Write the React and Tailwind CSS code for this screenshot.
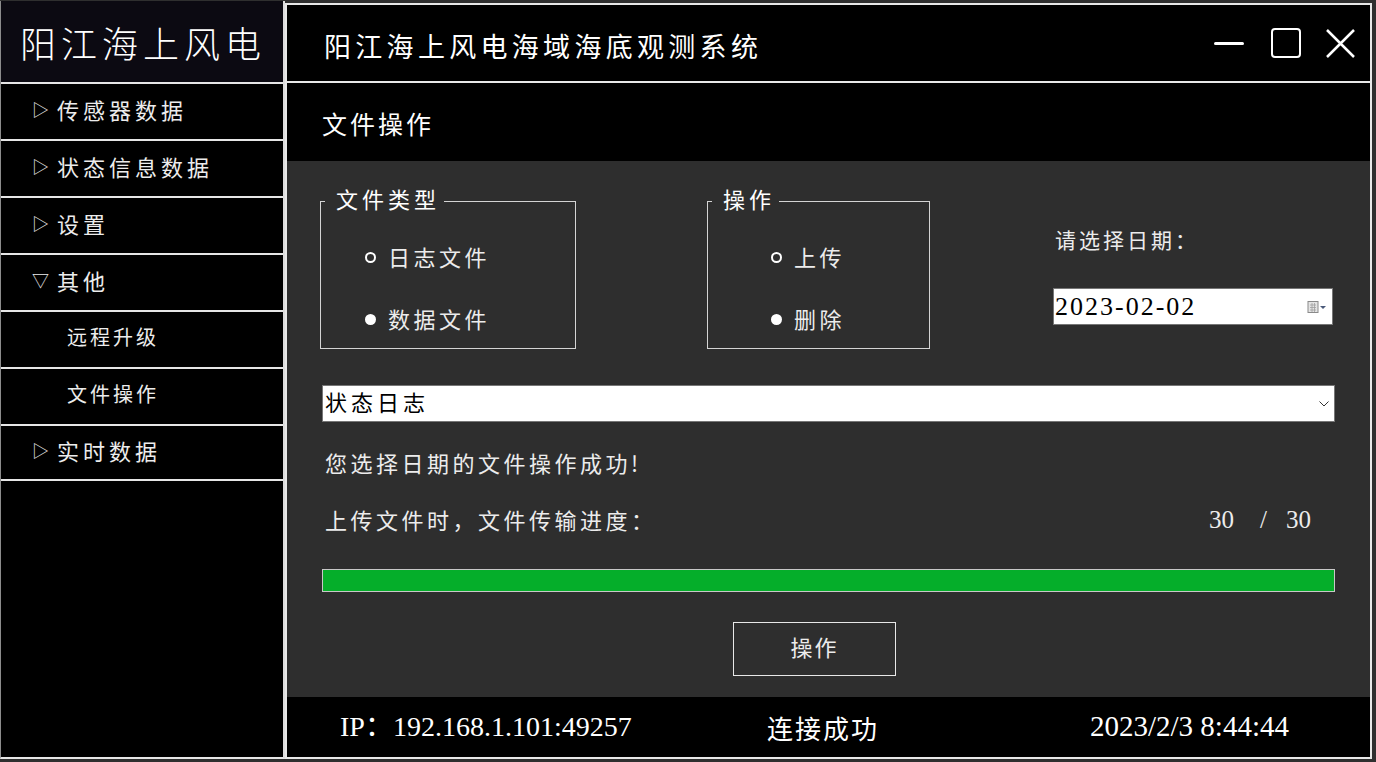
import React from 'react';

const cjk = "font-['Noto_Sans_CJK_SC',sans-serif]";
const serif = "font-['Liberation_Serif','Noto_Sans_CJK_SC',serif]";

const menu = [
    { t: '传感器数据', icon: '▷' },
    { t: '状态信息数据', icon: '▷' },
    { t: '设置', icon: '▷' },
    { t: '其他', icon: '▽' },
    { t: '远程升级', sub: true },
    { t: '文件操作', sub: true },
    { t: '实时数据', icon: '▷' },
];

const Radio = ({ on, label, offset }) => (
    <div className="flex items-center h-[30px]" style={{ paddingLeft: offset }}>
        {on
            ? <span className="w-[11px] h-[11px] rounded-full bg-white" />
            : <span className="w-[11px] h-[11px] rounded-full border-2 border-white" />}
        <span className="ml-[12px] pb-[3px] text-[22px] leading-[30px] tracking-[3.5px] text-[#ececec]">{label}</span>
    </div>
);

const Group = ({ title, width, offset, items, className }) => (
    <div className={"relative h-[148px] border border-[#d4d4d4] " + className} style={{ width }}>
        <div className="absolute -top-[19px] left-[4px] bg-[#2e2e2e] pl-[11px] pr-[4px] text-[22px] leading-[30px] tracking-[4px] text-white">
            {title}
        </div>
        <div className="pt-[40px] flex flex-col gap-[32px]">
            {items.map((it, i) => <Radio key={i} on={it.on} label={it.label} offset={offset} />)}
        </div>
    </div>
);

const App = () => {
    return (
        <div className={"w-[1376px] h-[762px] bg-[#2f2f2f] flex overflow-hidden " + cjk}>
            {/* Sidebar */}
            <div className="w-[285px] h-[758px] mt-[1px] bg-black border-l border-[#8c8c8c] border-r-2 border-r-[#dcdcdc] border-b-2 border-b-[#e6e6e6] flex flex-col">
                <div className="h-[81px] bg-[#0c0a12] flex items-center pl-[19px] text-[36px] tracking-[5px] text-white font-light">
                    阳江海上风电
                </div>
                {menu.map((m, i) => (
                    <div key={i} className={"h-[57px] pb-[5px] border-t-2 border-[#e6e6e6] flex items-center text-[#ececec] " + (i === menu.length - 1 ? 'border-b-2 border-b-[#e6e6e6]' : '')}>
                        {m.sub ? (
                            <span className="pl-[66px] text-[20px] tracking-[3px]">{m.t}</span>
                        ) : (
                            <>
                                <span className="pl-[31px] w-[56px] text-[17px]">{m.icon}</span>
                                <span className="text-[22px] tracking-[4px]">{m.t}</span>
                            </>
                        )}
                    </div>
                ))}
            </div>

            {/* Main window */}
            <div className="w-[1087px] h-[756px] mt-[3px] border-2 border-[#e8e8e8] flex flex-col bg-black">
                <div className="h-[78px] border-b-2 border-[#e8e8e8] flex items-center pl-[37px]">
                    <span className="flex-1 pt-[6px] text-[27px] tracking-[4.3px] text-white">阳江海上风电海域海底观测系统</span>
                    <div className="flex items-center pr-[14px]">
                        <span className="w-[30px] h-[3px] bg-white rounded-full" />
                        <span className="ml-[27px] w-[30px] h-[30px] rounded-[4px] border-2 border-white" />
                        <svg className="ml-[24px]" width="31" height="31" viewBox="0 0 31 31">
                            <path d="M2 2 L29 29 M29 2 L2 29" stroke="white" strokeWidth="2.5" />
                        </svg>
                    </div>
                </div>
                <div className="h-[78px] flex items-center pl-[35px] pt-[4px] text-[25px] tracking-[3px] text-white">
                    文件操作
                </div>

                {/* Content */}
                <div className="flex-1 bg-[#2e2e2e] px-[35px] pt-[40px]">
                    <div className="flex">
                        <Group title="文件类型" width="256px" offset="44px" className="-ml-[2px]"
                            items={[{ label: '日志文件' }, { label: '数据文件', on: true }]} />
                        <Group title="操作" width="223px" offset="63px" className="ml-[131px]"
                            items={[{ label: '上传' }, { label: '删除', on: true }]} />
                        <div className="ml-[123px] w-[280px]">
                            <div className="mt-[23px] ml-[2px] text-[21px] leading-[30px] tracking-[3px] text-[#ececec]">请选择日期：</div>
                            <div className="mt-[34px] h-[37px] bg-white border border-[#767676] flex items-center pl-[1px] pr-[5px]">
                                <span className={"flex-1 text-[26px] tracking-[2px] text-black " + serif}>2023-02-02</span>
                                <svg width="20" height="14" viewBox="0 0 20 14">
                                    <rect x="1" y="1.5" width="10" height="11" fill="#e4e4e4" stroke="#8a8a8a" />
                                    <path d="M3 5h6M3 7.5h6M3 10h6M5 3v9M7.5 3v9" stroke="#a0a0a0" strokeWidth="0.8" />
                                    <path d="M13 6h6l-3 3z" fill="#4a5a7a" />
                                </svg>
                            </div>
                        </div>
                    </div>

                    <div className="mt-[36px] h-[37px] bg-white border border-[#767676] flex items-center pl-[2px] pr-[5px]">
                        <span className="flex-1 pb-[4px] text-[22px] tracking-[4px] text-black">状态日志</span>
                        <svg width="10" height="6" viewBox="0 0 10 6">
                            <path d="M0.5 0.5 L5 5 L9.5 0.5" fill="none" stroke="#333" strokeWidth="1" />
                        </svg>
                    </div>

                    <div className="mt-[25px] ml-[3px] text-[22px] leading-[30px] tracking-[3.5px] text-[#ececec]">您选择日期的文件操作成功!</div>

                    <div className="mt-[27px] flex items-center h-[30px] text-[#ececec]">
                        <span className="flex-1 ml-[3px] text-[22px] tracking-[3.5px]">上传文件时，文件传输进度：</span>
                        <span className={"text-[25px] pr-[24px] pt-[2px] " + serif}>
                            30<span className="ml-[26px]">/</span><span className="ml-[19px]">30</span>
                        </span>
                    </div>

                    <div className="mt-[35px] h-[23px] bg-[#05ae2a] border border-[#c8c8c8]" />

                    <button className="mt-[30px] ml-[411px] w-[163px] h-[54px] pb-[5px] border border-[#e8e8e8] text-[22px] tracking-[2px] text-[#ececec] flex items-center justify-center">
                        操作
                    </button>
                </div>

                {/* Footer */}
                <div className="h-[60px] flex items-center pl-[53px] text-white">
                    <span className={"w-[427px] text-[28px] " + serif}>IP：192.168.1.101:49257</span>
                    <span className="w-[323px] text-[26px] tracking-[2px]">连接成功</span>
                    <span className={"text-[29px] " + serif}>2023/2/3 8:44:44</span>
                </div>
            </div>
        </div>
    );
};

export default App;
